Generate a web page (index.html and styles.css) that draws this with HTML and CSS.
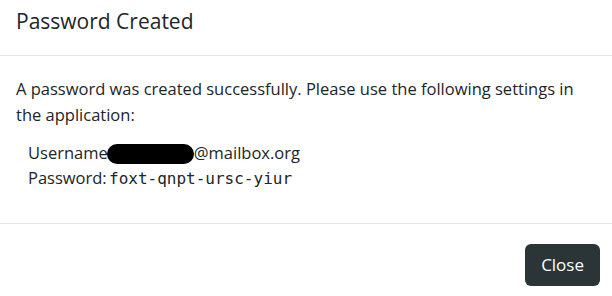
FILE: index.html
```html
<!DOCTYPE html>
<html lang="en">
<head>
<meta charset="utf-8">
<title>Password Created</title>
<link rel="stylesheet" href="styles.css">
</head>
<body>
<div class="modal">
  <div class="modal-header">
    <h5 class="modal-title">Password Created</h5>
  </div>
  <div class="modal-body">
    <p class="intro">A password was created successfully. Please use the following settings in the application:</p>
    <div class="settings">
      <div class="row">Username<span class="redact"></span>@mailbox.org</div>
      <div class="row">Password: <code class="pw">foxt-qnpt-ursc-yiur</code></div>
    </div>
  </div>
  <div class="modal-footer">
    <button class="btn" type="button">Close</button>
  </div>
</div>
</body>
</html>
```
FILE: styles.css
```css
html, body {
  margin: 0;
  padding: 0;
  background: #ffffff;
}
body {
  font-family: "Open Sans", "Noto Sans", sans-serif;
  font-size: 16.5px;
  line-height: 26px;
  color: #212529;
}
.modal {
  width: 612px;
  background: #fff;
}
.modal-header {
  padding: 9px 16px 22px 16px;
  border-bottom: 1px solid #e3e5e7;
}
.modal-title {
  margin: 0;
  font-size: 21px;
  font-weight: 400;
  line-height: 24px;
}
.modal-body {
  padding: 20px 16px 0 16px;
}
.intro {
  margin: 0 0 12px 0;
}
.settings {
  padding-left: 12px;
  padding-bottom: 33px;
}
.row {
  height: 25px;
  line-height: 25px;
  white-space: nowrap;
}
.redact {
  display: inline-block;
  width: 87px;
  height: 20px;
  background: #000;
  border-radius: 10px;
  vertical-align: -5px;
  margin-left: -1px;
}
.pw {
  font-family: "DejaVu Sans Mono", "Liberation Mono", monospace;
  font-size: 16px;
  line-height: 1;
  color: #212529;
  margin-left: -2px;
}
.modal-footer {
  display: flex;
  justify-content: flex-end;
  padding: 20px 12px 10px 12px;
  border-top: 1px solid #e3e5e7;
}
.btn {
  font-family: inherit;
  font-size: 17px;
  line-height: 26px;
  padding: 8px 16px;
  color: #fff;
  background: #2b3436;
  border: none;
  border-radius: 6px;
  margin: 0;
}
```
